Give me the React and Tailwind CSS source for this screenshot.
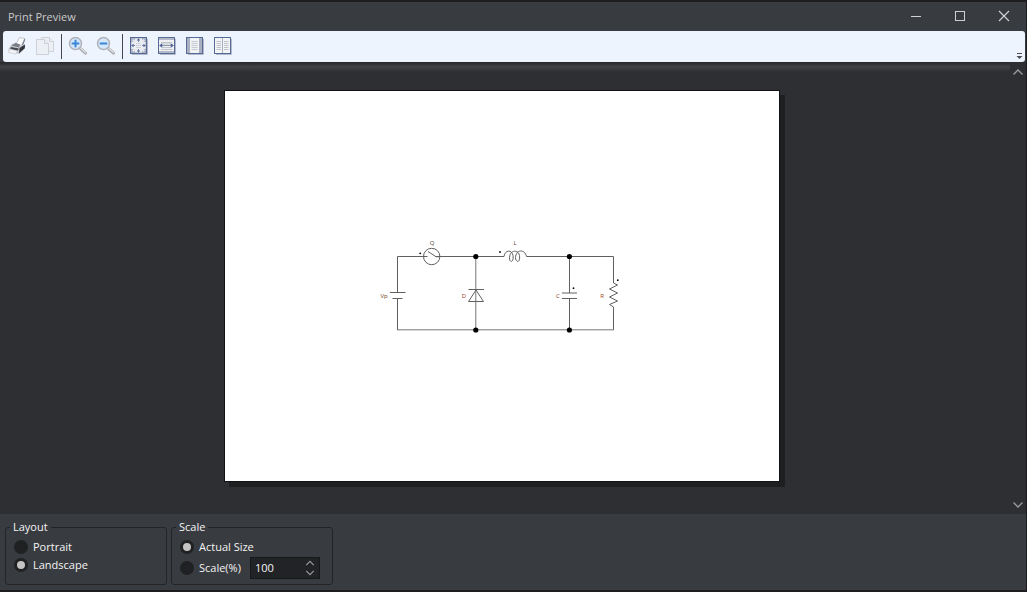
import { useState } from "react";

function PrinterIcon() {
  return (
    <svg width="20" height="20" viewBox="0 0 20 20" aria-hidden="true">
      <path d="M12.500 1.500 17.800 2.500 14.500 9.500 9 8Z" fill="#fdfdfe" stroke="#b4b7be" strokeWidth=".8" />
      <path d="M17.600 2.600 14.600 9.500 16 9.500 18.300 3.400Z" fill="#777b84" />
      <path d="M1.500 12.500 5 7.800 9 7.500 14 9 18 8.500 17.800 12.200 12 18 2 15.500Z" fill="#c6c9d0" />
      <path d="M4.500 9.800 8.500 6.800 13 8.400 12 11.500Z" fill="#7b7f88" />
      <path d="M12.500 12 18 8.600 17.800 12.300 12 17.500Z" fill="#33353b" />
      <path d="M4 11 11.800 12.600 10.500 15 3 13.200Z" fill="#43464d" />
      <path d="M2.800 13 10.400 14.800 8.500 18.200 1.200 16.200Z" fill="#f1f2f5" stroke="#c2c5cc" strokeWidth=".6" />
    </svg>
  );
}

function PagesIcon() {
  return (
    <svg width="20" height="20" viewBox="0 0 20 20" fill="#eceff3" stroke="#cdd1d7" aria-hidden="true">
      <path d="M6.500 1.500h8l4 4v10h-12z" />
      <path d="M14.500 1.500v4h4" />
      <path d="M1.500 3.500h8l4 4v11h-12z" />
      <path d="M9.500 3.500v4h4" />
    </svg>
  );
}

function MagnifierIcon({ plus }) {
  return (
    <svg width="20" height="20" viewBox="0 0 20 20" aria-hidden="true">
      <path d="m12.500 12.600 5 4.500" stroke="#a6a8ad" strokeWidth="3" strokeLinecap="round" />
      <path d="m12.600 12.300 4.800 4.300" stroke="#dedfe2" strokeWidth="1.300" strokeLinecap="round" />
      <circle cx="7.500" cy="7.500" r="6" fill="#d3e7fd" stroke="#b0b2b8" strokeWidth="1.500" />
      <path d="M3.700 7.500h7.600" stroke="#3c84d4" strokeWidth="2" />
      {plus && <path d="M7.500 3.700v7.600" stroke="#3c84d4" strokeWidth="2" />}
    </svg>
  );
}

function ViewFrame({ children, fill }) {
  return (
    <svg width="20" height="20" viewBox="0 0 20 20" aria-hidden="true">
      <path d="M3 18.500h15.500V3" fill="none" stroke="#b3bacb" />
      <rect x="1.500" y="1.500" width="16" height="16" fill={fill} stroke="#566a98" />
      {children}
    </svg>
  );
}

function FitPageIcon() {
  return (
    <ViewFrame fill="#a9b0c1">
      <path d="M6 2.500h7v14H6zM2.500 6h14v7h-14z" fill="#eceef2" />
      <path d="m3.800 3.800 2.500 2.500m8.900-2.500-2.500 2.500m-8.900 8.900 2.500-2.500m8.900 2.500-2.500-2.500" stroke="#e6e8ed" strokeWidth="2" />
      <path d="M7 7.500h5M7 9.500h5M7 11.500h5" stroke="#cdd1d9" />
      <path d="M9.500 2.200 7.800 4.600h3.400zM9.500 16.800l-1.700-2.400h3.400zM2.200 9.500l2.400-1.700v3.400zM16.800 9.500l-2.400-1.700v3.400z" fill="#4a6196" />
      <path d="M9.500 4v2m0 7v2M4 9.500h2m7 0h2" stroke="#7486ae" />
    </ViewFrame>
  );
}

function FitWidthIcon() {
  return (
    <ViewFrame fill="#eff0f3">
      <path d="M2 2h15v2H2zM2 15h15v2H2z" fill="#b3b9c7" />
      <path d="M4 6.500h11M5 8h9M5 11.500h9M4 13.500h11" stroke="#c0c5ce" />
      <path d="M4 9.500h11" stroke="#9099ad" />
      <path d="m2.200 9.500 3-2.300v4.600zM16.800 9.500l-3-2.300v4.600z" fill="#4a6196" />
    </ViewFrame>
  );
}

function OnePageIcon() {
  return (
    <ViewFrame fill="#a9b0c1">
      <path d="M5 2h9v15H5z" fill="#f1f2f4" />
      <path d="M6.500 5.500h6M6.500 7.500h6M6.500 9.500h6M6.500 11.500h6M6.500 13.500h6" stroke="#c6cad2" />
    </ViewFrame>
  );
}

function TwoPageIcon() {
  return (
    <ViewFrame fill="#f3f4f6">
      <path d="M9.500 2v15" stroke="#a4acbf" />
      <path d="M3.500 5.500h4.500M3.500 7.500h4.500M3.500 9.500h4.500M3.500 11.500h4.500M3.500 13.500h4.500M11 5.500h4.500M11 7.500h4.500M11 9.500h4.500M11 11.500h4.500M11 13.500h4.500" stroke="#bcc1ca" />
    </ViewFrame>
  );
}

function Chevron({ down, size }) {
  return (
    <svg width={size} height={size} viewBox="0 0 12 12" fill="none" stroke="#9b9c9e" strokeWidth="1.300" aria-hidden="true">
      <path d={down ? "M1.500 3.500 6 8l4.500-4.500" : "M1.500 8.500 6 4l4.500 4.500"} />
    </svg>
  );
}

function ToolButton({ label, disabled, children }) {
  return (
    <button type="button" aria-label={label} disabled={disabled} className="flex w-7 items-center justify-center pb-0.5">
      {children}
    </button>
  );
}

function Separator() {
  return (
    <div className="flex w-[5px] justify-center py-[3px]">
      <div className="w-px bg-[#44474d]" />
    </div>
  );
}

function CaptionButton({ label, children }) {
  return (
    <button type="button" aria-label={label} className="flex w-11 items-center justify-center">
      <svg width="12" height="12" viewBox="0 0 12 12" fill="none" stroke="#d0d1d2" aria-hidden="true">
        {children}
      </svg>
    </button>
  );
}

function Circuit() {
  return (
    <svg viewBox="225 91 554 390" className="block w-full" role="img" aria-label="Circuit schematic">
      <g fill="none" stroke="#606060">
        <path d="M397.500 292.500V256.500H427.500M435.500 256.500H504M526.500 256.500H613.500V283M613.500 307V330" />
        <path d="M397.500 298.500V330" />
        <path d="M397 329.800H614" stroke="#777" />
        <path d="M390 292.500H405.500M392.500 298.500H402.500" />
        <path d="M475.800 256V330" stroke="#777" />
        <path d="M468.500 289.500H484M468.500 301.500 476 290l7.500 11.500Z" />
        <circle cx="431.700" cy="256.500" r="8.200" />
        <path d="m428 251.500 8 5.200h4" />
        <path d="M504 256.500c1-7 8-7 9-1 1 8-4 7-3.500 2 .5-8 9-8 10-2 1 8-4 7-4 2 .5-8 9-9 11-1" />
        <path d="M569.500 256V293M569.500 298.500V330" />
        <path d="M562 293H577M562 298.500H577" />
        <path d="M613.500 283l4 2-8 4 8 4-8 4 8 4-8 3.500 4 2.500" />
      </g>
      <g fill="#000">
        <circle cx="475.800" cy="256.500" r="2.600" />
        <circle cx="475.800" cy="330" r="2.600" />
        <circle cx="569.400" cy="256.500" r="2.600" />
        <circle cx="569.400" cy="330" r="2.600" />
        <circle cx="420.200" cy="253.300" r=".9" />
        <circle cx="500" cy="252" r=".9" />
        <circle cx="573.500" cy="288.200" r=".9" />
        <circle cx="617.800" cy="280.200" r=".9" />
      </g>
      <g className="font-['Open_Sans',sans-serif] text-[6px] font-medium" textAnchor="middle">
        <text x="432" y="245" fill="#4a4540">Q</text>
        <text x="515" y="245" fill="#5a3a3a">L</text>
        <text x="384" y="298" fill="#6a3a18">Vp</text>
        <text x="464" y="298" fill="#8a4210">D</text>
        <text x="558" y="298" fill="#8a4210">C</text>
        <text x="602" y="298" fill="#9a4210">R</text>
      </g>
    </svg>
  );
}

function Radio({ name, label, checked, onChange }) {
  return (
    <label className="flex items-center gap-[5px]">
      <input
        type="radio"
        name={name}
        checked={checked}
        onChange={onChange}
        className="m-0 h-[14px] w-[14px] appearance-none rounded-full border-[3px] border-[#202123] bg-[#202123] checked:bg-[#c4c4c4]"
      />
      {label}
    </label>
  );
}

export default function App() {
  const [layout, setLayout] = useState("landscape");
  const [scaleMode, setScaleMode] = useState("actual");
  const [scale, setScale] = useState(100);

  return (
    <main className="flex min-h-screen flex-col border-t-2 border-r border-b-2 border-[#1d1d20] bg-[#383b3f] font-['Open_Sans','Noto_Sans',sans-serif] text-[11px] leading-4 text-[#f4f4f4]">
      <header className="flex h-7 items-stretch justify-between pl-2">
        <h1 className="self-center pt-0.5 text-[#c9cacb]">Print Preview</h1>
        <div className="flex">
          <CaptionButton label="Minimize"><path d="M1 6.500h10" /></CaptionButton>
          <CaptionButton label="Maximize"><rect x="1.500" y="1.500" width="9" height="9" /></CaptionButton>
          <CaptionButton label="Close"><path d="m1 1 10 10M11 1 1 11" strokeWidth="1.200" /></CaptionButton>
        </div>
      </header>

      <div role="toolbar" aria-label="Preview tools" className="mt-px mr-px ml-[3px] flex h-[31px] items-stretch rounded-[3px] bg-[#edf4fd]">
        <ToolButton label="Print"><PrinterIcon /></ToolButton>
        <ToolButton label="Copy" disabled><PagesIcon /></ToolButton>
        <Separator />
        <ToolButton label="Zoom in"><MagnifierIcon plus /></ToolButton>
        <ToolButton label="Zoom out"><MagnifierIcon /></ToolButton>
        <Separator />
        <ToolButton label="Whole page"><FitPageIcon /></ToolButton>
        <ToolButton label="Page width"><FitWidthIcon /></ToolButton>
        <ToolButton label="One page"><OnePageIcon /></ToolButton>
        <ToolButton label="Two pages"><TwoPageIcon /></ToolButton>
        <button type="button" aria-label="Toolbar options" className="ml-auto flex w-3 items-end justify-center pb-0.5">
          <svg width="7" height="7" viewBox="0 0 7 7" aria-hidden="true">
            <path d="M1 .5h5" stroke="#4c4e52" />
            <path d="M.5 3h6l-3 3z" fill="#4c4e52" />
          </svg>
        </button>
      </div>

      <section aria-label="Page preview" className="flex grow bg-[#2e2f32]">
        <div className="flex grow flex-col items-center pb-[31px]">
          <div className="h-[10px] w-full bg-linear-to-b from-[#26272a] via-[#414244] to-[#2e2f32]" />
          <div className="mt-[18px] mr-1.5 w-[556px] border border-[#111214] bg-white shadow-[5px_5px_0_#1e1f21]">
            <Circuit />
          </div>
        </div>
        <div className="flex w-4 flex-col items-center justify-between pt-1 pb-[3px]">
          <button type="button" aria-label="Scroll up"><Chevron size={12} /></button>
          <button type="button" aria-label="Scroll down"><Chevron size={12} down /></button>
        </div>
      </section>

      <footer className="flex gap-1 px-[5px] pt-[5px] pb-[5px]">
        <fieldset className="w-[162px] rounded-[3px] border border-[#222427] pl-2">
          <legend className="-ml-1 px-[3px]">Layout</legend>
          <div className="flex flex-col gap-0.5 pt-1">
            <Radio name="layout" label="Portrait" checked={layout === "portrait"} onChange={() => setLayout("portrait")} />
            <Radio name="layout" label="Landscape" checked={layout === "landscape"} onChange={() => setLayout("landscape")} />
          </div>
        </fieldset>
        <fieldset className="w-[162px] rounded-[3px] border border-[#222427] pl-2">
          <legend className="-ml-1 px-[3px]">Scale</legend>
          <div className="flex flex-col gap-0.5 pt-1 pb-[5px]">
            <Radio name="scale" label="Actual Size" checked={scaleMode === "actual"} onChange={() => setScaleMode("actual")} />
            <div className="flex items-center gap-[9px]">
              <Radio name="scale" label="Scale(%)" checked={scaleMode === "percent"} onChange={() => setScaleMode("percent")} />
              <div className="flex h-[22px] w-[70px] items-stretch border border-[#17181a] bg-[#222326]">
                <input
                  type="text"
                  inputMode="numeric"
                  aria-label="Scale percentage"
                  value={scale}
                  onChange={(e) => setScale(Number(e.target.value) || 0)}
                  className="w-0 grow bg-transparent pl-1 outline-none"
                />
                <div className="flex w-[18px] flex-col items-center">
                  <button type="button" aria-label="Increase" onClick={() => setScale(scale + 1)} className="flex h-[10px] items-center"><Chevron size={10} /></button>
                  <button type="button" aria-label="Decrease" onClick={() => setScale(Math.max(1, scale - 1))} className="flex h-[10px] items-center"><Chevron size={10} down /></button>
                </div>
              </div>
            </div>
          </div>
        </fieldset>
      </footer>
    </main>
  );
}
